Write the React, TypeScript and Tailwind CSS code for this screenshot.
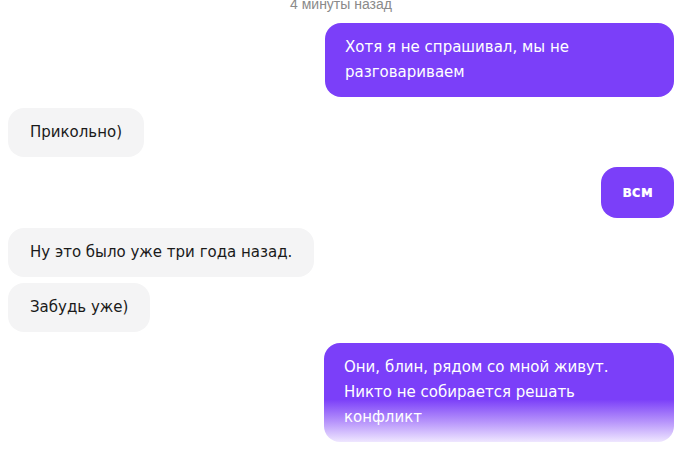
import React from "react";

const font = { fontFamily: '"DejaVu Sans", Verdana, sans-serif' };

function Mine({ children, className = "" }: { children: React.ReactNode; className?: string }) {
  return (
    <div className="flex justify-end">
      <div
        className={`rounded-[16px] bg-[#7b3ff9] px-[20px] text-[15px] leading-[25px] text-white ${className}`}
      >
        {children}
      </div>
    </div>
  );
}

function Theirs({ children }: { children: React.ReactNode }) {
  return (
    <div className="flex justify-start">
      <div className="rounded-[16px] bg-[#f4f4f5] px-[22px] py-[12px] text-[15px] leading-[25px] text-[#1a1a1a]">
        {children}
      </div>
    </div>
  );
}

export default function App() {
  return (
    <div className="h-[460px] w-[689px] overflow-hidden bg-white" style={font}>
      <div className="flex flex-col pl-[8px] pr-[15px]">
        <div
          className="-mt-[6px] mb-[9px] h-[20px] text-center text-[14px] leading-[20px] text-[#8a8a8a]"
          style={{ fontFamily: '"Liberation Sans", Arial, sans-serif' }}
        >
          4 минуты назад
        </div>
        <Mine className="w-[349px] py-[12px]">Хотя я не спрашивал, мы не разговариваем</Mine>
        <div className="mt-[11px]">
          <Theirs>Прикольно)</Theirs>
        </div>
        <div className="mt-[10px]">
          <Mine className="px-[21px] py-[13px] text-[13px] font-bold">всм</Mine>
        </div>
        <div className="mt-[10px]">
          <Theirs>Ну это было уже три года назад.</Theirs>
        </div>
        <div className="mt-[6px]">
          <Theirs>Забудь уже)</Theirs>
        </div>
        <div className="mt-[11px] flex justify-end">
          <div className="w-[350px] rounded-[16px] bg-[linear-gradient(to_bottom,#7b3ff9_0%,#7b3ff9_57%,#b896fb_80%,#efe7ff_100%)] px-[20px] py-[12px] text-[15px] leading-[25px] text-white">
            Они, блин, рядом со мной живут.
            <br />
            Никто не собирается решать
            <br />
            конфликт
          </div>
        </div>
      </div>
    </div>
  );
}
